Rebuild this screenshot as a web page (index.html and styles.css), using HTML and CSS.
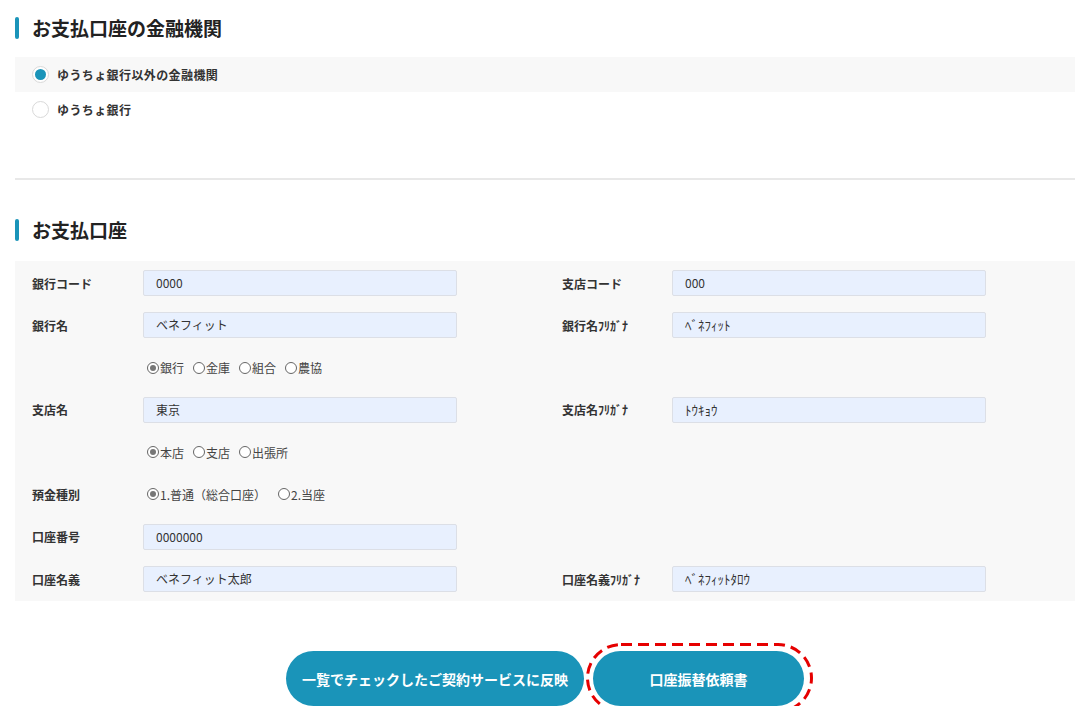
FILE: index.html
```html
<!DOCTYPE html>
<html lang="ja">
<head>
<meta charset="utf-8">
<title>お支払口座</title>
<link rel="stylesheet" href="styles.css">
</head>
<body>
<div class="page">
  <h2 class="sec-title sec-title--first">お支払口座の金融機関</h2>
  <div class="choice-list">
    <div class="choice choice--on"><span class="radio radio--on"></span><span class="choice-text">ゆうちょ銀行以外の金融機関</span></div>
    <div class="choice"><span class="radio"></span><span class="choice-text">ゆうちょ銀行</span></div>
  </div>
  <hr class="divider">
  <h2 class="sec-title">お支払口座</h2>
  <div class="panel">
    <div class="form-grid">
      <div class="lbl">銀行コード</div>
      <div class="field">0000</div>
      <div class="spacer"></div>
      <div class="lbl">支店コード</div>
      <div class="field">000</div>

      <div class="lbl">銀行名</div>
      <div class="field">ベネフィット</div>
      <div class="spacer"></div>
      <div class="lbl">銀行名ﾌﾘｶﾞﾅ</div>
      <div class="field field--hw">ﾍﾞﾈﾌｨｯﾄ</div>

      <div class="lbl"></div>
      <div class="opts"><span class="opt"><span class="sr sr--on"></span>銀行</span><span class="opt"><span class="sr"></span>金庫</span><span class="opt"><span class="sr"></span>組合</span><span class="opt"><span class="sr"></span>農協</span></div>
      <div class="spacer"></div>
      <div class="lbl"></div>
      <div class="empty"></div>

      <div class="lbl">支店名</div>
      <div class="field">東京</div>
      <div class="spacer"></div>
      <div class="lbl">支店名ﾌﾘｶﾞﾅ</div>
      <div class="field field--hw">ﾄｳｷｮｳ</div>

      <div class="lbl"></div>
      <div class="opts"><span class="opt"><span class="sr sr--on"></span>本店</span><span class="opt"><span class="sr"></span>支店</span><span class="opt"><span class="sr"></span>出張所</span></div>
      <div class="spacer"></div>
      <div class="lbl"></div>
      <div class="empty"></div>

      <div class="lbl">預金種別</div>
      <div class="opts"><span class="opt opt--wide"><span class="sr sr--on"></span>1.普通（総合口座）</span><span class="opt"><span class="sr"></span>2.当座</span></div>
      <div class="spacer"></div>
      <div class="lbl"></div>
      <div class="empty"></div>

      <div class="lbl">口座番号</div>
      <div class="field">0000000</div>
      <div class="spacer"></div>
      <div class="lbl"></div>
      <div class="empty"></div>

      <div class="lbl">口座名義</div>
      <div class="field">ベネフィット太郎</div>
      <div class="spacer"></div>
      <div class="lbl">口座名義ﾌﾘｶﾞﾅ</div>
      <div class="field field--hw">ﾍﾞﾈﾌｨｯﾄﾀﾛｳ</div>
    </div>
  </div>
  <div class="actions">
    <button class="btn btn--reflect" type="button">一覧でチェックしたご契約サービスに反映</button>
    <button class="btn btn--request" type="button">口座振替依頼書<svg class="mark" width="227" height="70" viewBox="0 0 227 70" aria-hidden="true"><rect x="1.5" y="1.5" width="224" height="67" rx="33.5" ry="33.5" fill="none" stroke="#e60000" stroke-width="3" stroke-dasharray="11 6"/></svg></button>
  </div>
</div>
</body>
</html>
```

FILE: styles.css
```css
html, body {
  margin: 0;
  padding: 0;
  background: #fff;
}
body {
  font-family: "Noto Sans CJK JP", "Noto Sans", sans-serif;
  color: #222;
}
.page {
  width: 1060px;
  padding: 17px 9px 0 15px;
}
.sec-title {
  margin: 0;
  position: relative;
  padding-left: 17px;
  height: 22px;
  line-height: 22px;
  font-size: 19px;
  font-weight: 700;
  color: #222;
}
.sec-title::before {
  content: "";
  position: absolute;
  left: 0;
  top: 0;
  width: 4px;
  height: 22px;
  border-radius: 2px;
  background: #1a94b9;
}
.choice-list {
  margin-top: 18px;
  display: flex;
  flex-direction: column;
}
.choice {
  height: 35px;
  display: flex;
  align-items: center;
  padding-left: 17px;
}
.choice--on {
  background: #f8f8f8;
}
.radio {
  width: 15px;
  height: 15px;
  border: 1px solid #d9d9d9;
  border-radius: 50%;
  background: #fff;
  box-sizing: content-box;
  position: relative;
  flex: none;
}
.radio--on::after {
  content: "";
  position: absolute;
  left: 2px;
  top: 2px;
  width: 11px;
  height: 11px;
  border-radius: 50%;
  background: #1a94b9;
}
.choice-text {
  margin-left: 8px;
  font-size: 12px;
  font-weight: 700;
  letter-spacing: 0.4px;
  color: #333;
}
.divider {
  margin: 51px 0 0;
  border: 0;
  height: 2px;
  background: #e8e8e8;
}
.divider + .sec-title {
  margin-top: 39px;
}
.panel {
  margin-top: 20px;
  background: #f8f8f8;
  padding: 9px 0 9px 17px;
}
.form-grid {
  display: grid;
  grid-template-columns: 111px 314px 105px 110px 314px;
  grid-auto-rows: 26px;
  row-gap: 16.3px;
  align-items: center;
}
.lbl {
  font-size: 12px;
  font-weight: 700;
  color: #333;
  white-space: nowrap;
}
.field {
  height: 26px;
  box-sizing: border-box;
  border: 1px solid #dcdfe6;
  border-radius: 2px;
  background: #e8f0fe;
  padding-left: 12px;
  font-size: 12px;
  line-height: 24px;
  color: #333;
}
.field--hw {
  font-size: 13px;
}
.opts {
  display: flex;
  align-items: center;
  font-size: 12px;
  color: #444;
  padding-left: 4px;
}
.opt {
  display: inline-flex;
  align-items: center;
  margin-right: 9px;
}
.opt--wide {
  margin-right: 12px;
}
.sr {
  width: 10px;
  height: 10px;
  border: 1px solid #666;
  border-radius: 50%;
  background: #fff;
  position: relative;
  margin-right: 1px;
  box-sizing: content-box;
}
.sr--on::after {
  content: "";
  position: absolute;
  left: 2px;
  top: 2px;
  width: 6px;
  height: 6px;
  border-radius: 50%;
  background: #777;
}
.actions {
  margin-top: 50px;
  display: flex;
  justify-content: center;
  gap: 9px;
}
.btn {
  height: 55px;
  border: 0;
  border-radius: 28px;
  background: #1a94b9;
  color: #fff;
  font-family: "Noto Sans CJK JP", "Noto Sans", sans-serif;
  font-size: 14px;
  font-weight: 700;
  cursor: pointer;
}
.btn--reflect {
  padding: 0 16px;
}
.btn--request {
  width: 211px;
  position: relative;
}
.mark {
  position: absolute;
  left: -7px;
  top: -8px;
  pointer-events: none;
}
```
